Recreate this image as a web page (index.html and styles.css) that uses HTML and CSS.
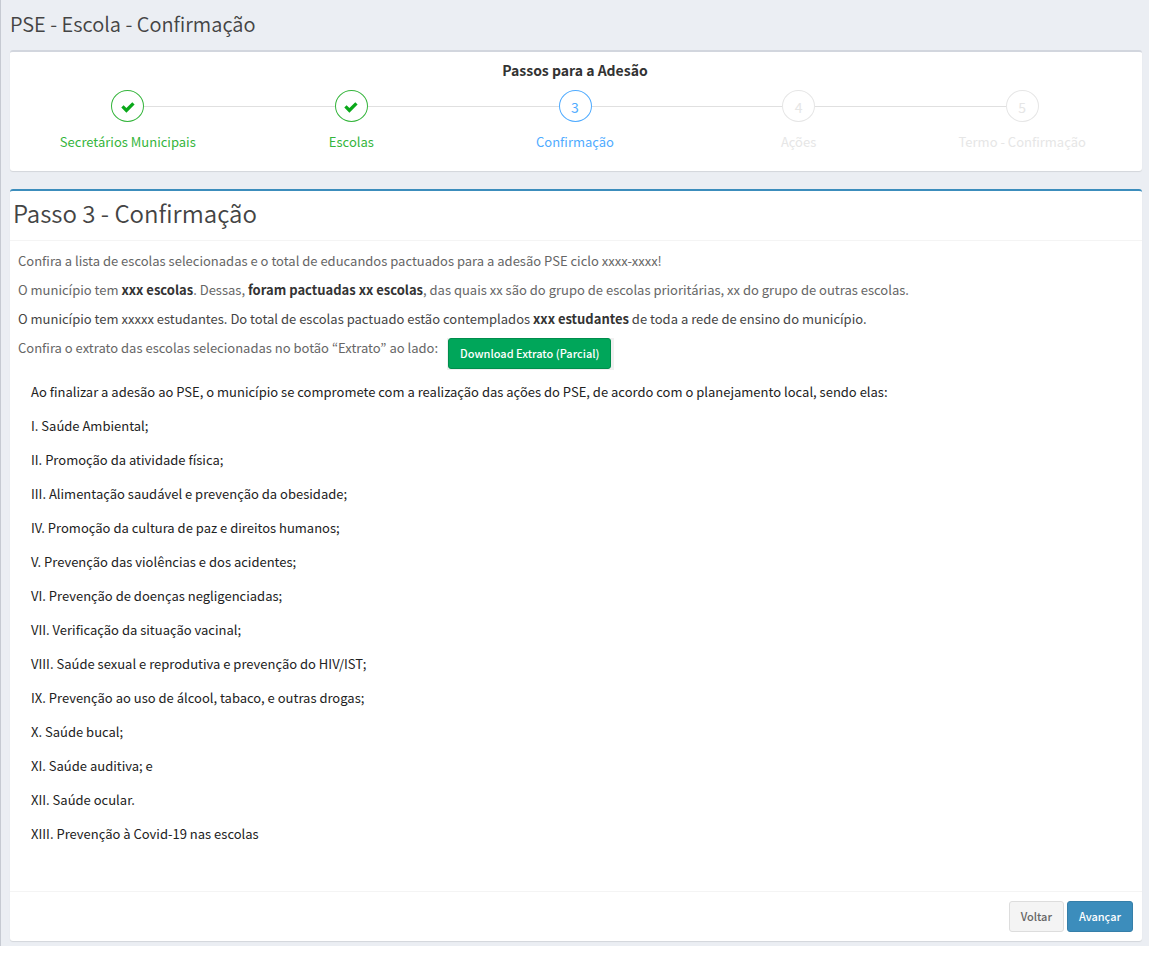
FILE: index.html
```html
<!DOCTYPE html>
<html lang="pt-BR">
<head>
<meta charset="utf-8">
<title>PSE - Escola - Confirmação</title>
<link rel="stylesheet" href="styles.css">
</head>
<body>
<main class="page">
  <h1 class="page-title">PSE - Escola - Confirmação</h1>

  <section class="box steps-box">
    <h2 class="steps-title">Passos para a Adesão</h2>
    <ol class="steps">
      <li class="step done">
        <div class="track"><span class="circle"><svg class="check" viewBox="0 0 14 11"><path d="M0.3 5.5 L2.6 3.2 L5.4 6 L11.3 0.3 L13.6 2.6 L5.4 10.7 Z"/></svg></span></div>
        <span class="label">Secretários Municipais</span>
      </li>
      <li class="step done">
        <div class="track"><span class="circle"><svg class="check" viewBox="0 0 14 11"><path d="M0.3 5.5 L2.6 3.2 L5.4 6 L11.3 0.3 L13.6 2.6 L5.4 10.7 Z"/></svg></span></div>
        <span class="label">Escolas</span>
      </li>
      <li class="step current" aria-current="step">
        <div class="track"><span class="circle">3</span></div>
        <span class="label">Confirmação</span>
      </li>
      <li class="step">
        <div class="track"><span class="circle">4</span></div>
        <span class="label">Ações</span>
      </li>
      <li class="step">
        <div class="track"><span class="circle">5</span></div>
        <span class="label">Termo - Confirmação</span>
      </li>
    </ol>
  </section>

  <section class="box form-box">
    <h2 class="box-header">Passo 3 - Confirmação</h2>
    <div class="box-body">
      <div class="summary">
        <p>Confira a lista de escolas selecionadas e o total de educandos pactuados para a adesão PSE ciclo xxxx-xxxx!</p>
        <p>O município tem <strong>xxx escolas</strong>. Dessas, <strong>foram pactuadas xx escolas</strong>, das quais xx são do grupo de escolas prioritárias, xx do grupo de outras escolas.</p>
        <p class="dark">O município tem xxxxx estudantes. Do total de escolas pactuado estão contemplados <strong>xxx estudantes</strong> de toda a rede de ensino do município.</p>
        <div class="download-row">
          <p>Confira o extrato das escolas selecionadas no botão “Extrato” ao lado:</p>
          <span class="download-frame"><button type="button" class="btn btn-success">Download Extrato (Parcial)</button></span>
        </div>
      </div>
      <div class="actions-list">
        <p>Ao finalizar a adesão ao PSE, o município se compromete com a realização das ações do PSE, de acordo com o planejamento local, sendo elas:</p>
        <p>I. Saúde Ambiental;</p>
        <p>II. Promoção da atividade física;</p>
        <p>III. Alimentação saudável e prevenção da obesidade;</p>
        <p>IV. Promoção da cultura de paz e direitos humanos;</p>
        <p>V. Prevenção das violências e dos acidentes;</p>
        <p>VI. Prevenção de doenças negligenciadas;</p>
        <p>VII. Verificação da situação vacinal;</p>
        <p>VIII. Saúde sexual e reprodutiva e prevenção do HIV/IST;</p>
        <p>IX. Prevenção ao uso de álcool, tabaco, e outras drogas;</p>
        <p>X. Saúde bucal;</p>
        <p>XI. Saúde auditiva; e</p>
        <p>XII. Saúde ocular.</p>
        <p>XIII. Prevenção à Covid-19 nas escolas</p>
      </div>
    </div>
    <footer class="box-footer">
      <button type="button" class="btn btn-default">Voltar</button>
      <button type="button" class="btn btn-primary">Avançar</button>
    </footer>
  </section>
</main>
</body>
</html>
```
FILE: styles.css
```css
* {
  box-sizing: border-box;
}

body {
  margin: 0;
  background: #fff;
  color: #333;
  font-family: "Noto Sans CJK KR", "Open Sans", sans-serif;
  font-size: 13px;
  line-height: 20px;
}

h1, h2, p, ol {
  margin: 0;
  padding: 0;
  font-weight: 400;
}

.page {
  margin-right: 7px;
  padding: 9px 7px 5px 9px;
  border-left: 1px solid #c6cad2;
  background: #ebeef3;
}

.page-title {
  color: #444;
  font-size: 20px;
  line-height: 30px;
  font-weight: 350;
  margin-bottom: 11px;
}

.box {
  border-top: 2px solid #d2d6de;
  border-radius: 3px;
  background: #fff;
  box-shadow: 0 1px 1px rgba(0, 0, 0, 0.1);
}

.steps-box {
  margin-bottom: 18px;
  padding: 8px 8px 19px 6px;
}

.steps-title {
  font-size: 14px;
  font-weight: 700;
  text-align: center;
}

.steps {
  display: grid;
  grid-template-columns: repeat(5, 1fr);
  margin-top: 10px;
  list-style: none;
}

.step {
  color: #e6e6e6;
  text-align: center;
}

.track {
  display: flex;
  align-items: center;
}

.track::before,
.track::after {
  content: "";
  flex: 1;
  height: 1px;
  background: #e0e0e0;
}

.step:first-child .track::before,
.step:last-child .track::after {
  background: none;
}

.circle {
  display: flex;
  align-items: center;
  justify-content: center;
  width: 33px;
  height: 32px;
  padding-top: 2px;
  border: 1px solid currentColor;
  border-radius: 50%;
  font-size: 14px;
}

.label {
  display: block;
  margin-top: 10px;
}

.done {
  color: #35b53c;
}

.current {
  color: #4fabff;
}

.check {
  width: 14px;
  height: 11px;
  fill: #0aa81a;
}

.form-box {
  border-top-color: #3c8dbc;
}

.box-header {
  padding: 4px 3px 10px;
  border-bottom: 1px solid #f4f4f4;
  color: #444;
  font-size: 24px;
  line-height: 35px;
  font-weight: 350;
}

.box-body {
  padding: 10px 8px 47px;
}

.summary {
  display: flex;
  flex-direction: column;
  gap: 9px;
  color: #666;
}

.summary strong {
  color: #333;
}

.summary .dark {
  color: #444;
}

.download-row {
  display: flex;
  align-items: flex-start;
  gap: 9px;
}

.download-frame {
  display: flex;
  padding: 0 3px 1px 1px;
  background: #f0f0f0;
}

.actions-list {
  display: flex;
  flex-direction: column;
  gap: 14px;
  padding: 12px 13px 0;
  color: #222;
}

.box-footer {
  display: flex;
  justify-content: flex-end;
  gap: 3px;
  padding: 9px;
  border-top: 1px solid #f4f4f4;
}

.btn {
  padding: 5px 11px;
  border: 1px solid;
  border-radius: 3px;
  font-family: inherit;
  font-size: 11px;
  font-weight: 500;
  line-height: 19px;
}

.btn-success {
  border-color: #008d4c;
  background: #00a65a;
  color: #fff;
}

.btn-default {
  border-color: #ddd;
  background: #f4f4f4;
  color: #666;
}

.btn-primary {
  border-color: #367fa9;
  background: #3c8dbc;
  color: #fff;
}
```
